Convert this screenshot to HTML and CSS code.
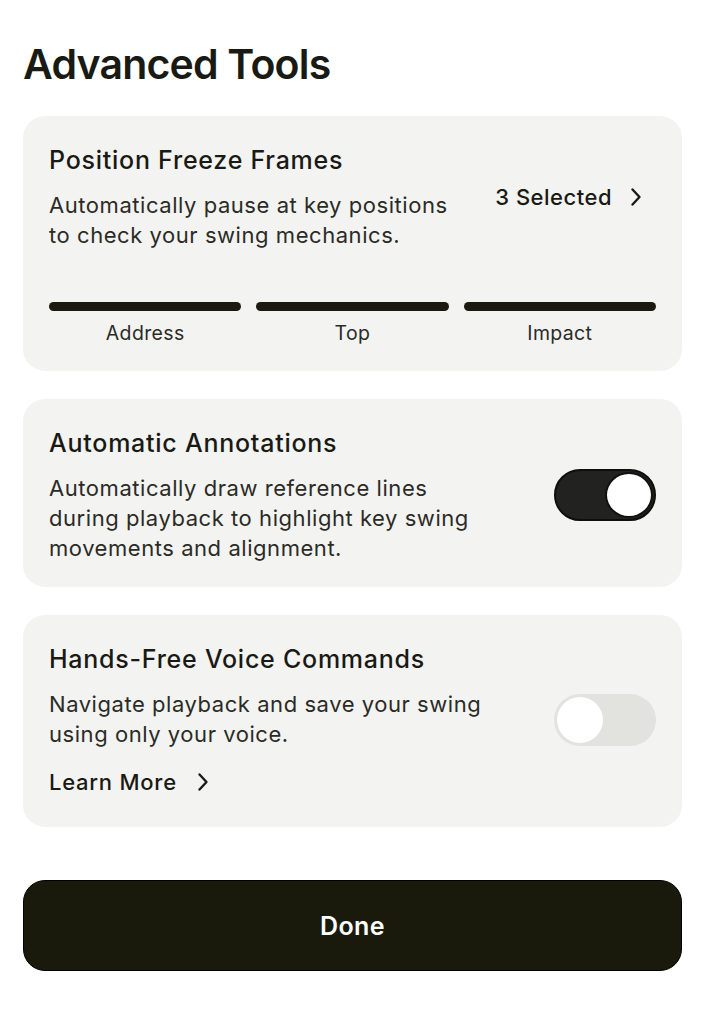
FILE: index.html
```html
<!DOCTYPE html>
<html lang="en">
<head>
<meta charset="utf-8">
<title>Advanced Tools</title>
<link rel="stylesheet" href="styles.css">
</head>
<body>
<main class="sheet">
  <h1 class="page-title">Advanced Tools</h1>

  <section class="card card-one">
    <div class="card-head">
      <div class="card-main">
        <h2 class="card-title">Position Freeze Frames</h2>
        <p class="card-text">Automatically pause at key positions to check your swing mechanics.</p>
      </div>
      <div class="selected">
        <span>3 Selected</span>
        <svg class="chev" viewBox="0 0 12 20" width="12" height="20"><path d="M2.5 2.5 L9.5 10 L2.5 17.5" fill="none" stroke="#1a1a14" stroke-width="2.4" stroke-linecap="round" stroke-linejoin="round"/></svg>
      </div>
    </div>
    <div class="frames">
      <div class="frame"><div class="bar"></div><span class="frame-label">Address</span></div>
      <div class="frame"><div class="bar"></div><span class="frame-label">Top</span></div>
      <div class="frame"><div class="bar"></div><span class="frame-label">Impact</span></div>
    </div>
  </section>

  <section class="card card-two">
    <div class="card-main">
      <h2 class="card-title">Automatic Annotations</h2>
      <p class="card-text">Automatically draw reference lines during playback to highlight key swing movements and alignment.</p>
    </div>
    <div class="toggle on"><div class="knob"></div></div>
  </section>

  <section class="card card-three">
    <div class="card-main">
      <h2 class="card-title">Hands-Free Voice Commands</h2>
      <p class="card-text">Navigate playback and save your swing using only your voice.</p>
      <a class="learn">Learn More
        <svg class="chev" viewBox="0 0 12 20" width="12" height="20"><path d="M2.5 2.5 L9.5 10 L2.5 17.5" fill="none" stroke="#1a1a14" stroke-width="2.4" stroke-linecap="round" stroke-linejoin="round"/></svg>
      </a>
    </div>
    <div class="toggle off"><div class="knob"></div></div>
  </section>

  <button class="done">Done</button>
</main>
</body>
</html>
```

FILE: styles.css
```css
* { box-sizing: border-box; }
html, body { margin: 0; padding: 0; background: #ffffff; }
body {
  font-family: "Inter", "Liberation Sans", sans-serif;
  color: #1a1a14;
}
.sheet {
  padding: 38px 26px 0 23px;
  display: flex;
  flex-direction: column;
}
.page-title {
  margin: 0 0 26px 0;
  font-size: 41px;
  line-height: 52px;
  font-weight: 600;
  letter-spacing: -0.8px;
}
.card {
  background: #f3f3f2;
  border-radius: 22px;
  padding: 28px 26px 26px 26px;
  margin-bottom: 28px;
}
.card-two,
.card-three {
  display: flex;
  align-items: center;
  justify-content: space-between;
  gap: 30px;
}
.card-two { padding-bottom: 24px; }
.card-three { padding-bottom: 30px; }
.card-main {
  flex: 1;
  min-width: 0;
  max-width: 440px;
  display: flex;
  flex-direction: column;
  align-items: flex-start;
}
.card-head {
  display: flex;
  align-items: center;
  justify-content: space-between;
  gap: 30px;
}
.card-title {
  margin: 0;
  font-size: 25px;
  line-height: 32px;
  font-weight: 500;
  letter-spacing: 0.75px;
}
.card-text {
  margin: 14px 0 0 0;
  font-size: 22px;
  line-height: 30px;
  color: #2b2b26;
  letter-spacing: 0.55px;
}
.selected {
  display: flex;
  align-items: center;
  gap: 18px;
  font-size: 22px;
  font-weight: 500;
  margin-right: 14px;
  letter-spacing: 0.5px;
  flex-shrink: 0;
}
.frames {
  display: grid;
  grid-template-columns: repeat(3, 1fr);
  gap: 15px;
  margin-top: 52px;
}
.frame {
  display: flex;
  flex-direction: column;
  align-items: center;
  gap: 10px;
}
.bar {
  width: 100%;
  height: 9px;
  border-radius: 5px;
  background: #1a1a0e;
}
.frame-label {
  font-size: 19.5px;
  line-height: 24px;
  color: #2b2b26;
  letter-spacing: 0.35px;
}
.toggle {
  width: 102px;
  height: 52px;
  border-radius: 26px;
  padding: 3px;
  display: flex;
  flex-shrink: 0;
}
.toggle .knob {
  width: 46px;
  height: 46px;
  border-radius: 50%;
  background: #ffffff;
}
.toggle.on {
  background: #222220;
  border: 2px solid #0e0e0c;
  justify-content: flex-end;
  padding: 1px;
}
.toggle.on .knob {
  border: 2px solid #111;
  width: 48px;
  height: 46px;
}
.toggle.off {
  background: #e2e2de;
  justify-content: flex-start;
}
.learn {
  display: inline-flex;
  align-items: center;
  gap: 20px;
  margin-top: 18px;
  font-size: 22px;
  line-height: 30px;
  font-weight: 500;
  letter-spacing: 0.75px;
}
.done {
  margin-top: 25px;
  height: 91px;
  border: 1.5px solid #000;
  border-radius: 22px;
  background: #191a0c;
  color: #ffffff;
  font-family: "Inter", "Liberation Sans", sans-serif;
  font-size: 25px;
  font-weight: 600;
  letter-spacing: 0.4px;
}
```
